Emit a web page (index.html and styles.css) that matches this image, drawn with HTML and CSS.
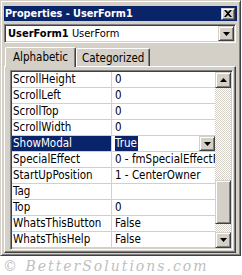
FILE: index.html
```html
<!DOCTYPE html>
<html lang="en">
<head>
  <meta charset="UTF-8" />
  <title>Properties - UserForm1</title>
  <link rel="stylesheet" href="styles.css">
</head>
<body>

  <div class="window">
    <div class="titlebar">
      <span class="title">Properties - UserForm1</span>
      <span class="btn close">
        <svg width="8" height="7" viewBox="0 0 8 7"><path d="M0 0h2l2 2 2-2h2L5 3.5 8 7H6L4 5 2 7H0l3-3.5z" fill="#000"/></svg>
      </span>
    </div>

    <div class="combo">
      <span class="combo-text"><b>UserForm1</b> UserForm</span>
      <span class="btn drop">
        <svg width="7" height="4" viewBox="0 0 7 4"><path d="M0 0h7L3.5 4z" fill="#000"/></svg>
      </span>
    </div>

    <div class="tabs">
      <div class="tab active">Alphabetic</div>
      <div class="tab">Categorized</div>
    </div>

    <div class="panel">
      <div class="grid">
        <div class="rows">
          <div class="row"><div class="name">ScrollHeight</div><div class="value">0</div></div>
          <div class="row"><div class="name">ScrollLeft</div><div class="value">0</div></div>
          <div class="row"><div class="name">ScrollTop</div><div class="value">0</div></div>
          <div class="row"><div class="name">ScrollWidth</div><div class="value">0</div></div>
          <div class="row selected">
            <div class="name">ShowModal</div>
            <div class="value"><span class="hilite">True</span>
              <span class="btn cell-drop">
                <svg width="7" height="4" viewBox="0 0 7 4"><path d="M0 0h7L3.5 4z" fill="#000"/></svg>
              </span>
            </div>
          </div>
          <div class="row"><div class="name">SpecialEffect</div><div class="value">0 - fmSpecialEffectFlat</div></div>
          <div class="row"><div class="name">StartUpPosition</div><div class="value">1 - CenterOwner</div></div>
          <div class="row"><div class="name">Tag</div><div class="value"></div></div>
          <div class="row"><div class="name">Top</div><div class="value">0</div></div>
          <div class="row"><div class="name">WhatsThisButton</div><div class="value">False</div></div>
          <div class="row"><div class="name">WhatsThisHelp</div><div class="value">False</div></div>
        </div>

        <div class="scrollbar">
          <span class="btn sb-btn">
            <svg width="7" height="4" viewBox="0 0 7 4"><path d="M0 4h7L3.5 0z" fill="#000"/></svg>
          </span>
          <div class="track">
            <span class="btn thumb"></span>
          </div>
          <span class="btn sb-btn">
            <svg width="7" height="4" viewBox="0 0 7 4"><path d="M0 0h7L3.5 4z" fill="#000"/></svg>
          </span>
        </div>
      </div>
    </div>
  </div>

  <div class="watermark">&copy; BetterSolutions.com</div>

</body>
</html>
```

FILE: styles.css
```css
body {
  margin: 0;
  background: #ffffff;
  font-family: 'DejaVu Sans Condensed', 'Liberation Sans', sans-serif;
  font-size: 11px;
  color: #000000;
}

/* shared raised bevel */
.btn {
  display: flex;
  align-items: center;
  justify-content: center;
  box-sizing: border-box;
  background: #d4d0c8;
  border: 1px solid;
  border-color: #d4d0c8 #404040 #404040 #d4d0c8;
  box-shadow: inset 1px 1px #ffffff, inset -1px -1px #808080;
}

.window {
  box-sizing: border-box;
  width: 241px;
  height: 256px;
  background: #d4d0c8;
  border: 1px solid;
  border-color: #d4d0c8 #404040 #404040 #d4d0c8;
  box-shadow: inset 1px 1px #ffffff, inset -1px -1px #808080;
  padding: 5px 3px 2px 3px;
  display: flex;
  flex-direction: column;
}

.titlebar {
  height: 15px;
  background: #0a246a;
  display: flex;
  align-items: center;
  justify-content: space-between;
  padding: 0 2px 0 1px;
}

.title {
  color: #ffffff;
  font-weight: bold;
  font-size: 10.8px;
}

.close {
  width: 14px;
  height: 12px;
}

.combo {
  margin-top: 3px;
  margin-right: 1px;
  height: 19px;
  box-sizing: border-box;
  background: #ffffff;
  border: 1px solid;
  border-color: #808080 #ffffff #ffffff #808080;
  box-shadow: inset 1px 1px #404040, inset -1px -1px #d4d0c8;
  display: flex;
  align-items: center;
  justify-content: space-between;
  padding: 1px 1px 1px 3px;
}

.combo-text {
  font-size: 11px;
}

.drop {
  width: 16px;
  height: 15px;
}

.tabs {
  display: flex;
  margin-top: 3px;
  padding-left: 1px;
  height: 20px;
  align-items: flex-end;
}

.tab {
  box-sizing: border-box;
  height: 18px;
  padding: 2px 5px 0 5px;
  border: 1px solid #ffffff;
  border-bottom: none;
  border-right: 1px solid #404040;
  box-shadow: inset -1px 0 #808080;
  border-radius: 2px 2px 0 0;
  font-size: 11.5px;
}

.tab.active {
  height: 20px;
  padding: 2px 7px 0 7px;
  margin-bottom: -1px;
  position: relative;
  z-index: 1;
  background: #d4d0c8;
}

.panel {
  flex: 1;
  box-sizing: border-box;
  margin-right: 1px;
  border: 1px solid;
  border-color: #ffffff #404040 #404040 #ffffff;
  box-shadow: inset -1px -1px #808080;
  padding: 3px 2px 2px 5px;
  display: flex;
  min-width: 0;
}

.grid {
  flex: 1;
  min-width: 0;
  box-sizing: border-box;
  border: 1px solid;
  border-color: #808080 #ffffff #ffffff #808080;
  box-shadow: inset 1px 1px #404040, inset -1px -1px #d4d0c8;
  padding: 1px;
  display: flex;
  background: #ffffff;
}

.rows {
  flex: 1;
  min-width: 0;
  overflow: hidden;
  font-size: 11.5px;
}

.row {
  display: flex;
  height: 16px;
  box-sizing: border-box;
  border-bottom: 1px solid #d4d0c8;
  line-height: 15px;
}

.name {
  width: 100px;
  flex: none;
  box-sizing: border-box;
  border-right: 1px solid #d4d0c8;
  padding-left: 1px;
  white-space: nowrap;
  overflow: hidden;
}

.value {
  flex: 1;
  min-width: 0;
  display: flex;
  padding-left: 3px;
  white-space: nowrap;
  overflow: hidden;
}

.row.selected .name {
  background: #0a246a;
  color: #ffffff;
}

.hilite {
  background: #0a246a;
  color: #ffffff;
  padding-right: 1px;
}

.cell-drop {
  margin-left: auto;
  width: 16px;
  height: 15px;
  flex: none;
}

.scrollbar {
  width: 16px;
  flex: none;
  display: flex;
  flex-direction: column;
}

.sb-btn {
  width: 16px;
  height: 16px;
  flex: none;
}

.track {
  flex: 1;
  background-color: #ffffff;
  background-image: conic-gradient(#d4d0c8 25%, #ffffff 0 50%, #d4d0c8 0 75%, #ffffff 0);
  background-size: 2px 2px;
}

.thumb {
  margin-top: 92px;
  width: 16px;
  height: 44px;
}

.watermark {
  margin: 2px 0 0 3px;
  font-family: 'DejaVu Serif', serif;
  font-style: italic;
  font-size: 14px;
  letter-spacing: 2px;
  color: #c0c0c0;
}
```
